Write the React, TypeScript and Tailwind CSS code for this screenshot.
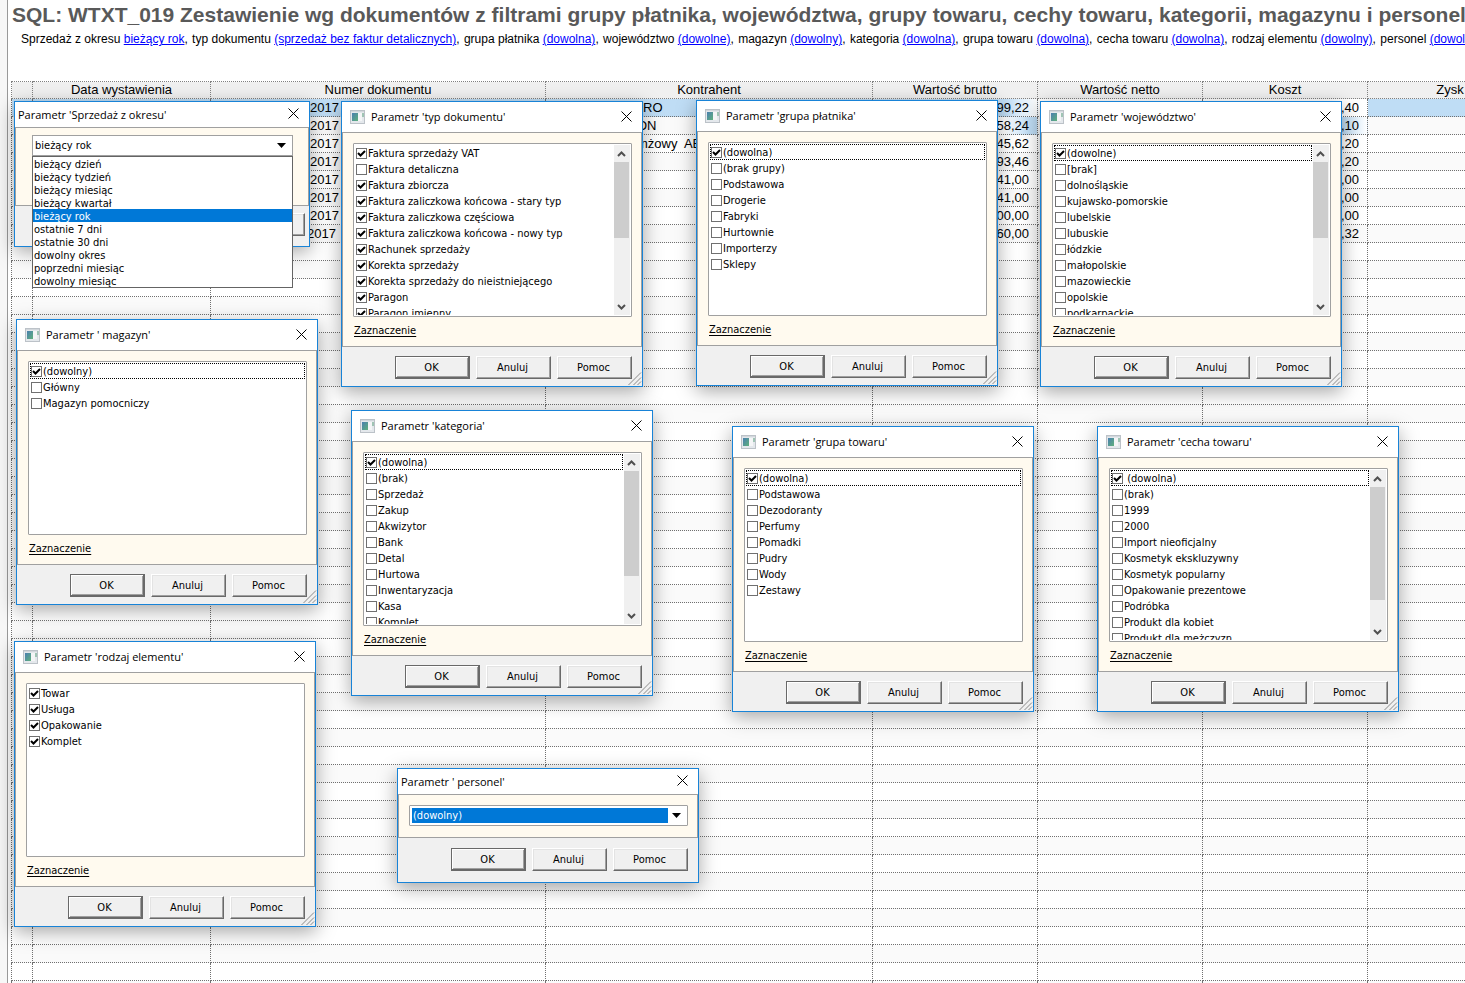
import { Fragment, ReactNode, useState } from 'react'

interface Option {
  label: string
  checked?: boolean
}

interface ListDialogData {
  id: string
  title: string
  place: string
  options: Option[]
  focused?: boolean
  thumb?: string
}

interface Row {
  number?: string
  numberPad?: string
  client?: string
  clientPad?: string
  gross?: string
  cost?: string
}

const off = (...labels: string[]): Option[] => labels.map((label) => ({ label }))
const on = (...labels: string[]): Option[] => labels.map((label) => ({ label, checked: true }))

const DIALOGS: ListDialogData[] = [
  {
    id: 'typ',
    title: "Parametr 'typ dokumentu'",
    place: 'left-[341px] top-[101px]',
    thumb: 'h-[76px]',
    options: [
      ...on('Faktura sprzedaży VAT'),
      ...off('Faktura detaliczna'),
      ...on(
        'Faktura zbiorcza',
        'Faktura zaliczkowa końcowa - stary typ',
        'Faktura zaliczkowa częściowa',
        'Faktura zaliczkowa końcowa - nowy typ',
        'Rachunek sprzedaży',
        'Korekta sprzedaży',
        'Korekta sprzedaży do nieistniejącego',
        'Paragon',
        'Paragon imienny',
      ),
    ],
  },
  {
    id: 'platnik',
    title: "Parametr 'grupa płatnika'",
    place: 'left-[696px] top-[100px]',
    focused: true,
    options: [
      ...on('(dowolna)'),
      ...off('(brak grupy)', 'Podstawowa', 'Drogerie', 'Fabryki', 'Hurtownie', 'Importerzy', 'Sklepy'),
    ],
  },
  {
    id: 'wojewodztwo',
    title: "Parametr 'województwo'",
    place: 'left-[1040px] top-[101px]',
    focused: true,
    thumb: 'h-[76px]',
    options: [
      ...on('(dowolne)'),
      ...off(
        '[brak]',
        'dolnośląskie',
        'kujawsko-pomorskie',
        'lubelskie',
        'lubuskie',
        'łódzkie',
        'małopolskie',
        'mazowieckie',
        'opolskie',
        'podkarpackie',
      ),
    ],
  },
  {
    id: 'magazyn',
    title: "Parametr ' magazyn'",
    place: 'left-[16px] top-[319px]',
    focused: true,
    options: [...on('(dowolny)'), ...off('Główny', 'Magazyn pomocniczy')],
  },
  {
    id: 'kategoria',
    title: "Parametr 'kategoria'",
    place: 'left-[351px] top-[410px]',
    focused: true,
    thumb: 'h-[105px]',
    options: [
      ...on('(dowolna)'),
      ...off(
        '(brak)',
        'Sprzedaż',
        'Zakup',
        'Akwizytor',
        'Bank',
        'Detal',
        'Hurtowa',
        'Inwentaryzacja',
        'Kasa',
        'Komplet',
      ),
    ],
  },
  {
    id: 'towar',
    title: "Parametr 'grupa towaru'",
    place: 'left-[732px] top-[426px]',
    focused: true,
    options: [
      ...on('(dowolna)'),
      ...off('Podstawowa', 'Dezodoranty', 'Perfumy', 'Pomadki', 'Pudry', 'Wody', 'Zestawy'),
    ],
  },
  {
    id: 'cecha',
    title: "Parametr 'cecha towaru'",
    place: 'left-[1097px] top-[426px]',
    focused: true,
    thumb: 'h-[113px]',
    options: [
      ...on('\u00a0(dowolna)'),
      ...off(
        '(brak)',
        '1999',
        '2000',
        'Import nieoficjalny',
        'Kosmetyk ekskluzywny',
        'Kosmetyk popularny',
        'Opakowanie prezentowe',
        'Podróbka',
        'Produkt dla kobiet',
        'Produkt dla mężczyzn',
      ),
    ],
  },
  {
    id: 'rodzaj',
    title: "Parametr 'rodzaj elementu'",
    place: 'left-[14px] top-[641px]',
    options: on('Towar', 'Usługa', 'Opakowanie', 'Komplet'),
  },
]

const PERIODS = [
  'bieżący dzień',
  'bieżący tydzień',
  'bieżący miesiąc',
  'bieżący kwartał',
  'bieżący rok',
  'ostatnie 7 dni',
  'ostatnie 30 dni',
  'dowolny okres',
  'poprzedni miesiąc',
  'dowolny miesiąc',
]

const FILTERS: [string, string][] = [
  ['Sprzedaż z okresu', 'bieżący rok'],
  ['typ dokumentu', '(sprzedaż bez faktur detalicznych)'],
  ['grupa płatnika', '(dowolna)'],
  ['województwo', '(dowolne)'],
  ['magazyn', '(dowolny)'],
  ['kategoria', '(dowolna)'],
  ['grupa towaru', '(dowolna)'],
  ['cecha towaru', '(dowolna)'],
  ['rodzaj elementu', '(dowolny)'],
  ['personel', '(dowolny)'],
]

const COLUMNS = ['', 'Data wystawienia', 'Numer dokumentu', 'Kontrahent', 'Wartość brutto', 'Wartość netto', 'Koszt', 'Zysk']

const FILLED: Row[] = [
  { number: '2017', client: 'RO', clientPad: 'pl-[97px]', gross: '99,22', cost: ',40' },
  { number: '2017', client: 'ON', clientPad: 'pl-[91px]', gross: '58,24', cost: ',10' },
  { number: '2017', client: 'mżowy\u00a0 AB', clientPad: 'pl-[91px]', gross: '45,62', cost: ',20' },
  { number: '2017', gross: '93,46', cost: ',20' },
  { number: '2017', gross: '41,00', cost: ',00' },
  { number: '2017', gross: '41,00', cost: ',00' },
  { number: '2017', gross: '00,00', cost: ',00' },
  { number: '2017', numberPad: 'pl-[96px]', gross: '60,00', cost: ',32' },
]

const ROWS: Row[] = [...FILLED, ...Array.from({ length: 42 }, () => ({}))]

function WindowIcon() {
  return (
    <svg width="15" height="14" viewBox="0 0 15 14" aria-hidden="true">
      <defs>
        <linearGradient id="pane" x1="0" y1="0" x2="1" y2="1">
          <stop offset="0" stopColor="#4a7fb0" />
          <stop offset="1" stopColor="#5fb07c" />
        </linearGradient>
      </defs>
      <rect x="0.5" y="0.5" width="14" height="13" fill="#e4e8ec" stroke="#bcc2c8" />
      <rect x="1" y="1" width="13" height="1" fill="#d2d7dc" />
      <rect x="2" y="3" width="6" height="8" fill="url(#pane)" />
      <rect x="8" y="3" width="4" height="8" fill="#f4f5f6" />
      <rect x="12" y="3" width="2" height="4" fill="#9fc4b4" />
    </svg>
  )
}

function CloseIcon() {
  return (
    <svg width="11" height="11" viewBox="0 0 11 11" fill="none" stroke="#000" aria-hidden="true">
      <path d="M0.5 0.5l10 10M10.5 0.5l-10 10" />
    </svg>
  )
}

function Grip() {
  return (
    <svg
      className="absolute right-0 bottom-0"
      width="14"
      height="14"
      viewBox="0 0 14 14"
      fill="none"
      stroke="#8a8a8a"
      aria-hidden="true"
    >
      <path d="M0.5 13L13 0.5M5.5 13L13 5.5M9.5 13L13 9.5" />
    </svg>
  )
}

function Frame({
  title,
  place,
  width,
  icon,
  children,
}: {
  title: string
  place: string
  width: string
  icon?: boolean
  children: ReactNode
}) {
  return (
    <section
      aria-label={title}
      className={`absolute ${place} ${width} border border-[#1883d7] bg-[#f0f0f0] font-['DejaVu_Sans_Condensed','DejaVu_Sans',sans-serif] text-[11px] leading-4 text-black shadow-[0_5px_18px_rgba(0,0,0,0.35)]`}
    >
      <header className={`flex items-center bg-white ${icon ? 'h-[30px] gap-1.5 pl-2' : 'h-[25px] pl-[3px]'}`}>
        {icon && <WindowIcon />}
        <h2 className="flex-1 font-['Open_Sans',sans-serif] whitespace-pre">{title}</h2>
        <button type="button" aria-label="Zamknij" className="px-2.5 pb-0.5">
          <CloseIcon />
        </button>
      </header>
      {children}
    </section>
  )
}

function PushButton({ children, primary }: { children: ReactNode; primary?: boolean }) {
  return (
    <button
      type="button"
      className={`h-[23px] w-[75px] border bg-[#f0f0f0] pr-0.5 leading-4 ${
        primary
          ? 'border-[#696969] shadow-[inset_-1px_-1px_#696969,inset_1px_1px_#fff,inset_-2px_-2px_#a0a0a0]'
          : 'border-t-white border-r-[#696969] border-b-[#696969] border-l-white shadow-[inset_-1px_-1px_#a0a0a0,inset_1px_1px_#e3e3e3]'
      }`}
    >
      {children}
    </button>
  )
}

function Actions() {
  return (
    <div className="flex justify-end gap-1.5">
      <PushButton primary>OK</PushButton>
      <PushButton>Anuluj</PushButton>
      <PushButton>Pomoc</PushButton>
    </div>
  )
}

function CheckRow({ option, focused }: { option: Option; focused?: boolean }) {
  return (
    <li className={focused ? 'h-4 outline-1 -outline-offset-1 outline-dotted outline-black' : 'h-4'}>
      <label className="flex h-4 gap-px pl-px leading-[18px] whitespace-pre">
        <span className="mt-[3px] grid size-[11px] shrink-0">
          <input
            type="checkbox"
            defaultChecked={option.checked}
            className="peer col-start-1 row-start-1 size-[11px] appearance-none border border-[#707070] bg-white"
          />
          <svg
            className="pointer-events-none invisible col-start-1 row-start-1 peer-checked:visible"
            width="11"
            height="11"
            viewBox="0 0 11 11"
            fill="none"
            stroke="#000"
            strokeWidth="2"
            aria-hidden="true"
          >
            <path d="M2 5l2.5 2.5L9 3" />
          </svg>
        </span>
        {option.label}
      </label>
    </li>
  )
}

function Arrow({ up }: { up?: boolean }) {
  return (
    <svg width="9" height="6" viewBox="0 0 9 6" fill="none" stroke="#505050" strokeWidth="2" aria-hidden="true">
      <path d={up ? 'M1 5l3.5-3.5L8 5' : 'M1 1l3.5 3.5L8 1'} />
    </svg>
  )
}

function Scrollbar({ thumb }: { thumb: string }) {
  return (
    <div className="ml-px flex w-4 shrink-0 flex-col bg-[#f0f0f0]">
      <button type="button" aria-label="W górę" className="grid h-[17px] w-[15px] place-items-center">
        <Arrow up />
      </button>
      <div className="flex-1">
        <div className={`w-[15px] bg-[#cdcdcd] ${thumb}`} />
      </div>
      <button type="button" aria-label="W dół" className="grid h-[17px] w-[15px] place-items-center">
        <Arrow />
      </button>
    </div>
  )
}

function ListDialog({ data }: { data: ListDialogData }) {
  return (
    <Frame title={data.title} place={data.place} width="w-[302px]" icon>
      <div className="border border-[#a0a0a0] bg-[#fffaef] pt-2.5 pr-[9px] pb-[7px] pl-2.5">
        <div className="flex h-[174px] overflow-hidden rounded-[1px] border border-[#a0a0a0] bg-white p-px">
          <ul className="flex-1 overflow-hidden">
            {data.options.map((option, i) => (
              <CheckRow key={option.label} option={option} focused={data.focused && i === 0} />
            ))}
          </ul>
          {data.thumb && <Scrollbar thumb={data.thumb} />}
        </div>
        <a href={`#${data.id}`} className="mt-1.5 ml-px inline-block align-top underline underline-offset-2">
          Zaznaczenie
        </a>
      </div>
      <footer className="px-2.5 pt-[9px] pb-[7px]">
        <Actions />
      </footer>
      <Grip />
    </Frame>
  )
}

function DropArrow({ className }: { className: string }) {
  return (
    <svg
      className={`pointer-events-none col-start-1 row-start-1 self-center justify-self-end ${className}`}
      width="9"
      height="5"
      viewBox="0 0 9 5"
      aria-hidden="true"
    >
      <path d="M0 0h9L4.5 5z" />
    </svg>
  )
}

function PeriodDialog() {
  const [period, setPeriod] = useState('bieżący rok')

  return (
    <Frame title="Parametr 'Sprzedaż z okresu'" place="left-[14px] top-[101px]" width="w-[296px]">
      <div className="h-[79px] border border-[#a0a0a0] bg-[#fffaef] pt-[7px] pr-[15px] pl-4">
        <div className="relative grid">
          <select
            aria-label="Okres"
            value={period}
            onChange={(e) => setPeriod(e.target.value)}
            className="col-start-1 row-start-1 h-[21px] appearance-none border border-[#a0a0a0] bg-white pt-px pl-0.5"
          >
            {PERIODS.map((name) => (
              <option key={name}>{name}</option>
            ))}
          </select>
          <DropArrow className="mr-[7px]" />
          <ul role="listbox" aria-label="Okresy" className="absolute inset-x-0 top-full z-10 border border-[#646464] bg-white">
            {PERIODS.map((name) => (
              <li
                key={name}
                role="option"
                aria-selected={name === period}
                onClick={() => setPeriod(name)}
                className={`h-[13px] pl-px leading-4 ${name === period ? 'bg-[#0078d7] text-white' : ''}`}
              >
                {name}
              </li>
            ))}
          </ul>
        </div>
      </div>
      <footer className="pt-[7px] pr-1 pb-2.5">
        <Actions />
      </footer>
    </Frame>
  )
}

function StaffDialog() {
  return (
    <Frame title="Parametr ' personel'" place="left-[397px] top-[768px]" width="w-[302px]">
      <div className="border border-[#a0a0a0] bg-[#fffaef] pt-2.5 pr-[9px] pb-[11px] pl-2.5">
        <div className="grid h-[21px] rounded-[1px] border border-[#a0a0a0] bg-white p-0.5">
          <select
            aria-label="Personel"
            className="col-start-1 row-start-1 mr-[17px] h-[15px] appearance-none bg-[#0078d7] pt-px pl-px leading-[14px] text-white"
          >
            <option>(dowolny)</option>
          </select>
          <DropArrow className="mr-1" />
        </div>
      </div>
      <footer className="px-2.5 pt-2.5 pb-[11px]">
        <Actions />
      </footer>
    </Frame>
  )
}

// the highlight is broken up between the first two rows
function cellShade(row: number, column: number) {
  if (row === 0) {
    if (column === 4) return 'bg-linear-to-r from-[#bfddf5] from-80% to-white'
    if (column === 5 || column === 6) return ''
    return 'bg-[#bfddf5]'
  }
  if (row === 1 && column === 4) return 'bg-linear-to-r from-white from-80% to-[#bfddf5] to-95%'
  if (row === 1 && column === 6) return 'bg-linear-to-r from-[#bfddf5] from-85% to-white'
  return ''
}

function ReportTable() {
  return (
    <table className="w-[1521px] table-fixed border-collapse text-[13px] leading-4 text-black">
      <colgroup>
        <col className="w-[21px]" />
        <col className="w-[178px]" />
        <col className="w-[335px]" />
        <col className="w-[327px]" />
        <col className="w-[165px]" />
        <col className="w-[165px]" />
        <col className="w-[165px]" />
        <col className="w-[165px]" />
      </colgroup>
      <thead>
        <tr className="h-[17px] bg-[#f0f0f0]">
          {COLUMNS.map((name) => (
            <th key={name} scope="col" className="border border-dotted border-[#808080] p-0 font-normal">
              {name}
            </th>
          ))}
        </tr>
      </thead>
      <tbody>
        {ROWS.map((row, i) => {
          const cells: [string, string | undefined][] = [
            ['', undefined],
            ['', undefined],
            [row.numberPad ?? 'pl-[99px]', row.number],
            [row.clientPad ?? '', row.client],
            ['pr-2 text-right', row.gross],
            ['', undefined],
            ['pr-2 text-right', row.cost],
            ['', undefined],
          ]
          return (
            <tr key={i} className={i % 2 ? 'h-[18px] bg-[#fafafa]' : 'h-[18px]'}>
              {cells.map(([align, text], c) => (
                <td
                  key={c}
                  className={`border border-dotted border-[#707070] pt-px pb-0 align-top whitespace-nowrap ${align} ${cellShade(i, c)}`}
                >
                  {text}
                </td>
              ))}
            </tr>
          )
        })}
      </tbody>
    </table>
  )
}

export default function App() {
  return (
    <main className="relative h-screen overflow-hidden bg-[#f7f7f7] pl-[7px] font-['Liberation_Sans',Arial,sans-serif]">
      <div className="min-h-full overflow-hidden border-l border-[#999] bg-white pl-[3px]">
        <h1 className="pt-0.5 pl-px text-[21px] leading-[26px] font-bold whitespace-nowrap text-[#595959]">
          SQL: WTXT_019 Zestawienie wg dokumentów z filtrami grupy płatnika, województwa, grupy towaru, cechy towaru,
          kategorii, magazynu i personelu
        </h1>
        <p className="mb-[34px] pt-[3px] pl-2.5 text-xs leading-4 whitespace-nowrap text-black">
          {FILTERS.map(([name, value], i) => (
            <Fragment key={name}>
              {i > 0 && ', '}
              <span className={i > 0 ? 'ml-px' : ''}>
                {name}{' '}
                <a href="#filtr" className="text-[#0000ff] underline">
                  {value}
                </a>
              </span>
            </Fragment>
          ))}
        </p>
        <ReportTable />
      </div>

      <PeriodDialog />
      {DIALOGS.map((data) => (
        <ListDialog key={data.id} data={data} />
      ))}
      <StaffDialog />
    </main>
  )
}
